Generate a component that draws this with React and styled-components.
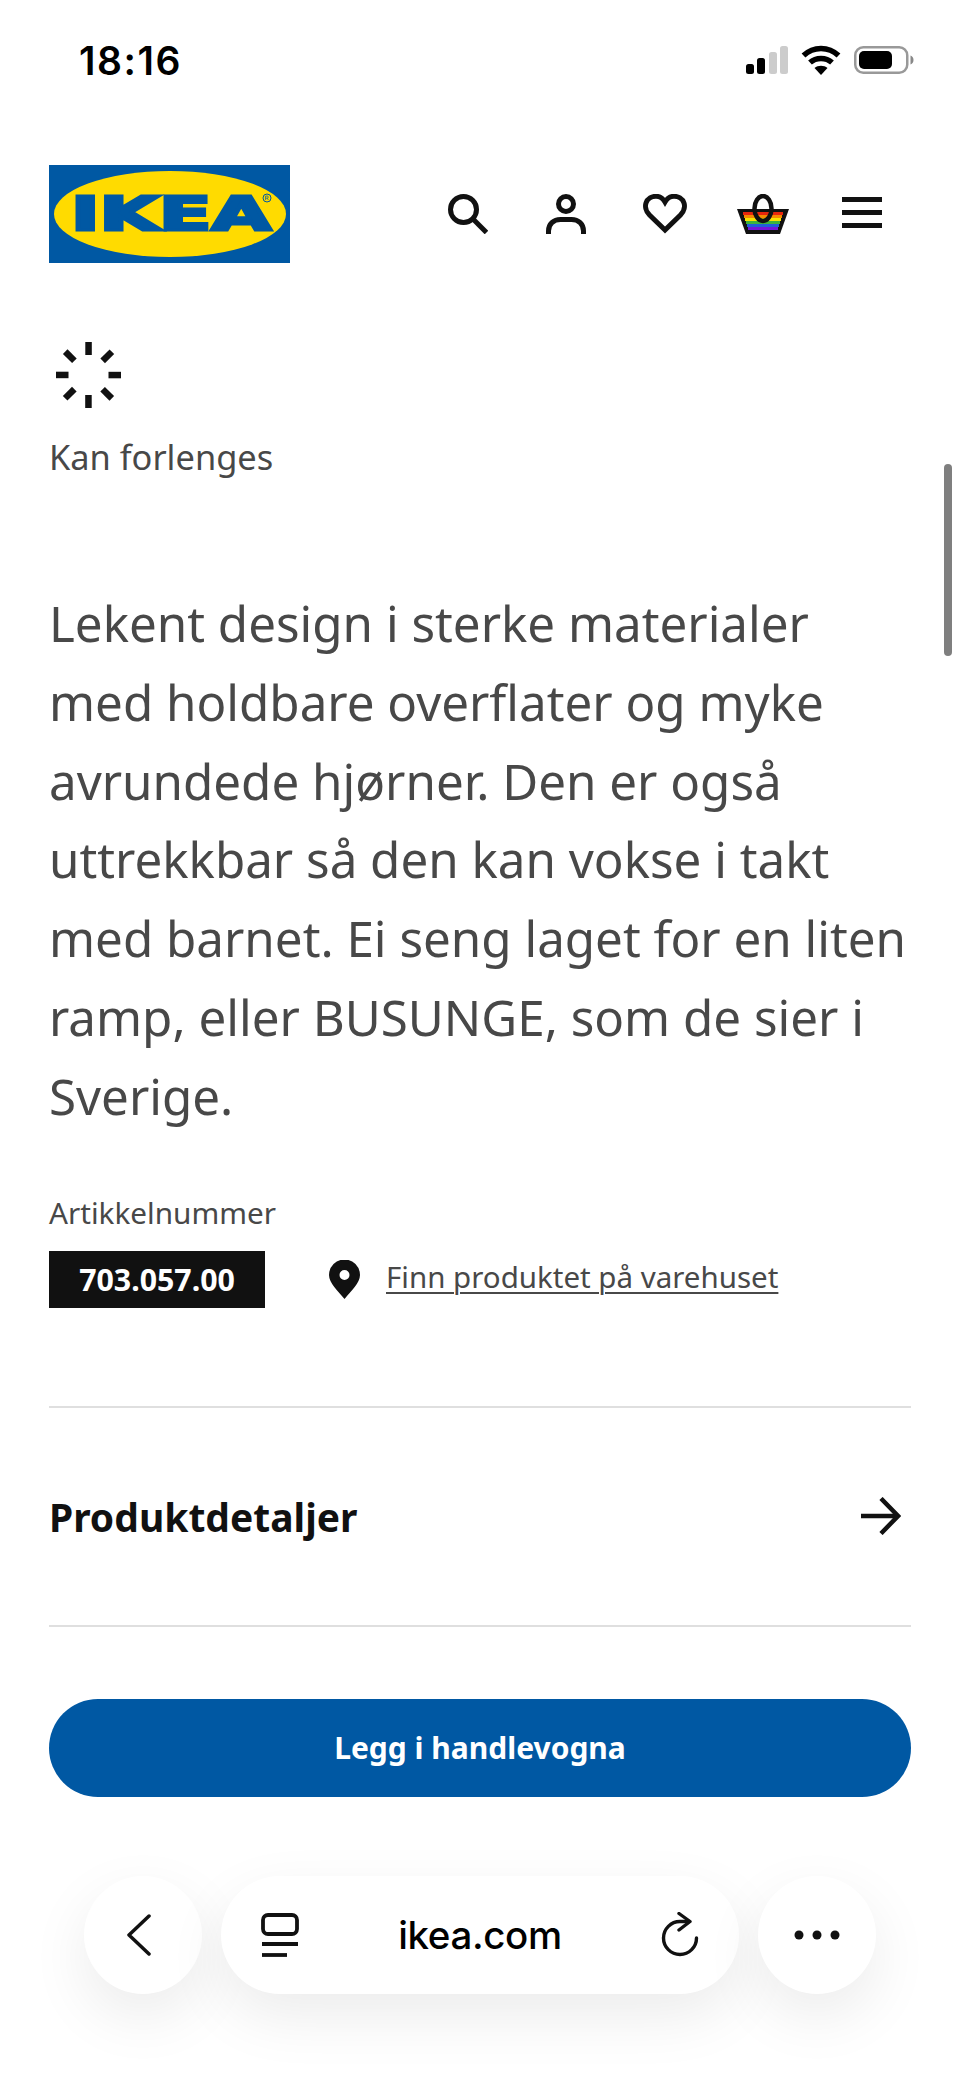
import React from 'react';
import styled, { createGlobalStyle } from 'styled-components';

const GlobalStyle = createGlobalStyle`
  html, body {
    margin: 0;
    padding: 0;
    background: #fff;
  }
`;

const Page = styled.div`
  position: relative;
  width: 960px;
  height: 2078px;
  overflow: hidden;
  background: #fff;
  font-family: "Noto Sans", sans-serif;
  color: #484848;
`;

const StatusBar = styled.div`
  height: 120px;
  box-sizing: border-box;
  padding: 0 46px 0 79px;
  display: flex;
  align-items: center;
  justify-content: space-between;
`;

const Clock = styled.span`
  font-family: Inter, sans-serif;
  font-size: 39px;
  font-weight: 600;
  letter-spacing: 1.5px;
  color: #000;
`;

const StatusIcons = styled.div`
  display: flex;
  align-items: center;
  gap: 13px;
`;

const Header = styled.header`
  margin-top: 45px;
  padding: 0 49px;
  display: flex;
  align-items: center;
  justify-content: space-between;
`;

const Nav = styled.nav`
  display: flex;
`;

const NavIcon = styled.div`
  width: 98.5px;
  height: 98px;
  display: flex;
  align-items: center;
  justify-content: center;
`;

const Content = styled.main`
  padding: 79px 49px 0;
`;

const Spinner = styled.svg`
  display: block;
  margin-left: 7px;
`;

const Caption = styled.div`
  margin-top: 27px;
  font-size: 34.4px;
  line-height: 44px;
`;

const Description = styled.p`
  margin: 105px 0 0;
  font-size: 49.3px;
  line-height: 78.8px;
`;

const ArticleLabel = styled.div`
  margin-top: 57px;
  font-size: 29.7px;
  line-height: 40px;
`;

const ArticleRow = styled.div`
  margin-top: 18px;
  display: flex;
  align-items: center;
`;

const ArticleNumber = styled.div`
  width: 216px;
  height: 57px;
  background: #111;
  color: #fff;
  font-size: 30.3px;
  font-weight: 700;
  display: flex;
  align-items: center;
  justify-content: center;
`;

const StoreLink = styled.a`
  margin-left: 26px;
  padding-bottom: 5px;
  font-size: 29.5px;
  color: #484848;
  text-decoration: underline;
  text-decoration-thickness: 2px;
  text-underline-offset: 4px;
`;

const PinIcon = styled.svg`
  margin-left: 64px;
`;

const DetailsRow = styled.div`
  margin-top: 98px;
  height: 217px;
  border-top: 2px solid #dfdfdf;
  border-bottom: 2px solid #dfdfdf;
  padding-right: 10px;
  display: flex;
  align-items: center;
  justify-content: space-between;
`;

const DetailsTitle = styled.span`
  font-size: 39px;
  font-weight: 700;
  color: #111;
`;

const BuyButton = styled.button`
  display: block;
  width: 100%;
  height: 98px;
  margin-top: 72px;
  border: 0;
  border-radius: 50px;
  background: #0058a3;
  color: #fff;
  font-family: "Noto Sans", sans-serif;
  font-size: 30px;
  font-weight: 700;
`;

const BrowserBar = styled.div`
  position: absolute;
  top: 1876px;
  left: 84px;
  display: flex;
  gap: 19px;
`;

const RoundButton = styled.div`
  width: 118px;
  height: 118px;
  border-radius: 50%;
  background: #fff;
  box-shadow: 0 22px 60px rgba(0, 0, 0, 0.08);
  display: flex;
  align-items: center;
  justify-content: center;
`;

const AddressPill = styled.div`
  width: 518px;
  height: 118px;
  box-sizing: border-box;
  padding: 0 40px;
  border-radius: 59px;
  background: #fff;
  box-shadow: 0 22px 60px rgba(0, 0, 0, 0.08);
  display: flex;
  align-items: center;
  justify-content: space-between;
`;

const Address = styled.span`
  font-family: Inter, sans-serif;
  font-size: 38.5px;
  font-weight: 500;
  letter-spacing: -0.4px;
  color: #000;
`;

const BackGlyph = styled.svg`
  margin-right: 8px;
`;

const ScrollThumb = styled.div`
  position: absolute;
  top: 464px;
  left: 944px;
  width: 8px;
  height: 192px;
  border-radius: 4px;
  background: #7f7f7f;
`;

const SignalIcon = () => (
  <svg width="42" height="28" viewBox="0 0 42 28">
    <rect x="0" y="18" width="8" height="10" rx="2.5" fill="#000" />
    <rect x="11" y="12" width="8" height="16" rx="2.5" fill="#000" />
    <rect x="23" y="6" width="8" height="22" rx="2.5" fill="#ccc" />
    <rect x="34" y="0" width="8" height="28" rx="2.5" fill="#ccc" />
  </svg>
);

const WifiIcon = () => (
  <svg width="40" height="30" viewBox="0 0 40 30" fill="none" stroke="#000" strokeWidth="5.5">
    <path d="M2.5 10.5C12.5 1 27.5 1 37.5 10.5" />
    <path d="M9 17.5C15 12 25 12 31 17.5" />
    <path d="M20 30l-6.5-7c3.5-3 9.5-3 13 0z" fill="#000" stroke="none" />
  </svg>
);

const BatteryIcon = () => (
  <svg width="60" height="28" viewBox="0 0 60 28" fill="none">
    <rect x="1.25" y="1.25" width="52" height="25.5" rx="8" stroke="#999" strokeWidth="2.5" />
    <rect x="5" y="5" width="33" height="18" rx="5" fill="#000" />
    <path d="M56.5 9.5c2 .8 3 2.5 3 4.5s-1 3.7-3 4.5z" fill="#888" />
  </svg>
);

const IkeaLogo = () => (
  <svg width="241" height="98" viewBox="0 0 241 98">
    <rect width="241" height="98" fill="#0058a3" />
    <ellipse cx="121" cy="49" rx="116" ry="43" fill="#ffdb00" />
    <text
      x="22"
      y="65"
      textLength="200"
      lengthAdjust="spacingAndGlyphs"
      fontFamily="DejaVu Sans, sans-serif"
      fontWeight="700"
      fontSize="46"
      fill="#0058a3"
      stroke="#0058a3"
      strokeWidth="3"
    >
      IKEA
    </text>
    <circle cx="218" cy="33" r="4" fill="none" stroke="#0058a3" strokeWidth="1" />
    <path d="M216.6 35v-4h1.6a1 1 0 010 2.2h-1.6m1.6 0l1.2 1.8" fill="none" stroke="#0058a3" strokeWidth=".7" />
  </svg>
);

const SearchIcon = () => (
  <svg width="40" height="40" viewBox="0 0 40 40" fill="none" stroke="#111" strokeWidth="5">
    <circle cx="15.5" cy="15.500" r="13" />
    <path d="M25 25l13.500 13.500" />
  </svg>
);

const PersonIcon = () => (
  <svg width="40" height="40" viewBox="0 0 40 40" fill="none" stroke="#111" strokeWidth="5">
    <circle cx="20" cy="10" r="7.500" />
    <path d="M2.500 40v-3c0-7 5-11.500 12-11.500h11c7 0 12 4.500 12 11.500v3" />
  </svg>
);

const HeartIcon = () => (
  <svg width="44" height="40" viewBox="0 0 44 40" fill="none" stroke="#111" strokeWidth="5" strokeLinejoin="miter">
    <path d="M22 36L6.500 21C2.500 17 2 12 3 9C4.500 4.500 9 2.300 13 2.300C17 2.300 20 4.500 22 8C24 4.500 27 2.300 31 2.300C35 2.300 39.500 4.500 41 9C42 12 41.500 17 37.500 21Z" />
  </svg>
);

const stripes = ['#e8260c', '#f68a00', '#f7e400', '#3cb43c', '#1f5fd8', '#7416d8'];

const BagIcon = () => (
  <svg width="52" height="40" viewBox="0 0 52 40">
    <path d="M0 15h52l-9 25H9z" fill="#111" />
    {stripes.map((color, i) => (
      <rect key={color} x={6 + i * 1} y={18 + i * 3} width={40 - i * 2} height="3" fill={color} />
    ))}
    <ellipse cx="26" cy="14.500" rx="8.500" ry="12.500" fill="none" stroke="#111" strokeWidth="4.500" />
  </svg>
);

const MenuIcon = () => (
  <svg width="40" height="34" viewBox="0 0 40 34" fill="#111">
    <rect y="0" width="40" height="5" />
    <rect y="13" width="40" height="5" />
    <rect y="26" width="40" height="5" />
  </svg>
);

const spinnerAngles = [0, 45, 90, 135, 180, 225, 270, 315];

const SpinnerIcon = () => (
  <Spinner width="65" height="66" viewBox="0 0 65 66">
    {spinnerAngles.map((angle) => (
      <rect key={angle} x="29.300" y="0" width="6.500" height="13" fill="#111" transform={`rotate(${angle} 32.500 33)`} />
    ))}
  </Spinner>
);

const ArrowIcon = () => (
  <svg width="40" height="38" viewBox="0 0 40 38" fill="none" stroke="#111" strokeWidth="4.500">
    <path d="M0 19h36" />
    <path d="M20 1.500L37 19 20 36.500" />
  </svg>
);

const BackIcon = () => (
  <BackGlyph width="26" height="42" viewBox="0 0 26 42" fill="none" stroke="#111" strokeWidth="3.500" strokeLinecap="round" strokeLinejoin="round">
    <path d="M23 2L3 21l20 19" />
  </BackGlyph>
);

const TabsIcon = () => (
  <svg width="38" height="44" viewBox="0 0 38 44" fill="none" stroke="#111" strokeWidth="3.800">
    <rect x="2" y="2" width="34" height="19" rx="5" />
    <path d="M1 31h36" />
    <path d="M1 42h25" />
  </svg>
);

const ReloadIcon = () => (
  <svg width="38" height="46" viewBox="0 0 38 46" fill="none" stroke="#111" strokeWidth="3.400" strokeLinecap="round" strokeLinejoin="round">
    <path d="M28 9.500H19A16.500 16.500 0 1 0 35.500 26" />
    <path d="M18 1.500L29 9.500 18 18" />
  </svg>
);

const DotsIcon = () => (
  <svg width="46" height="10" viewBox="0 0 46 10" fill="#111">
    <circle cx="5" cy="5" r="4.500" />
    <circle cx="23" cy="5" r="4.500" />
    <circle cx="41" cy="5" r="4.500" />
  </svg>
);

function App() {
  return (
    <Page>
      <GlobalStyle />
      <StatusBar>
        <Clock>18:16</Clock>
        <StatusIcons>
          <SignalIcon />
          <WifiIcon />
          <BatteryIcon />
        </StatusIcons>
      </StatusBar>

      <Header>
        <IkeaLogo />
        <Nav>
          <NavIcon><SearchIcon /></NavIcon>
          <NavIcon><PersonIcon /></NavIcon>
          <NavIcon><HeartIcon /></NavIcon>
          <NavIcon><BagIcon /></NavIcon>
          <NavIcon><MenuIcon /></NavIcon>
        </Nav>
      </Header>

      <Content>
        <SpinnerIcon />
        <Caption>Kan forlenges</Caption>
        <Description>
          Lekent design i sterke materialer
          <br />
          med holdbare overflater og myke
          <br />
          avrundede hjørner. Den er også
          <br />
          uttrekkbar så den kan vokse i takt
          <br />
          med barnet. Ei seng laget for en liten
          <br />
          ramp, eller BUSUNGE, som de sier i
          <br />
          Sverige.
        </Description>
        <ArticleLabel>Artikkelnummer</ArticleLabel>
        <ArticleRow>
          <ArticleNumber>703.057.00</ArticleNumber>
          <PinIcon width="31" height="39" viewBox="0 0 31 39">
            <path
              fillRule="evenodd"
              d="M15.500 39C9 31 0 23 0 15a15.500 15.500 0 0131 0c0 8-9 16-15.500 24zM15.500 10a5 5 0 100 10 5 5 0 000-10z"
              fill="#111"
            />
          </PinIcon>
          <StoreLink>Finn produktet på varehuset</StoreLink>
        </ArticleRow>
        <DetailsRow>
          <DetailsTitle>Produktdetaljer</DetailsTitle>
          <ArrowIcon />
        </DetailsRow>
        <BuyButton>Legg i handlevogna</BuyButton>
      </Content>

      <ScrollThumb />

      <BrowserBar>
        <RoundButton><BackIcon /></RoundButton>
        <AddressPill>
          <TabsIcon />
          <Address>ikea.com</Address>
          <ReloadIcon />
        </AddressPill>
        <RoundButton><DotsIcon /></RoundButton>
      </BrowserBar>
    </Page>
  );
}

export default App;
